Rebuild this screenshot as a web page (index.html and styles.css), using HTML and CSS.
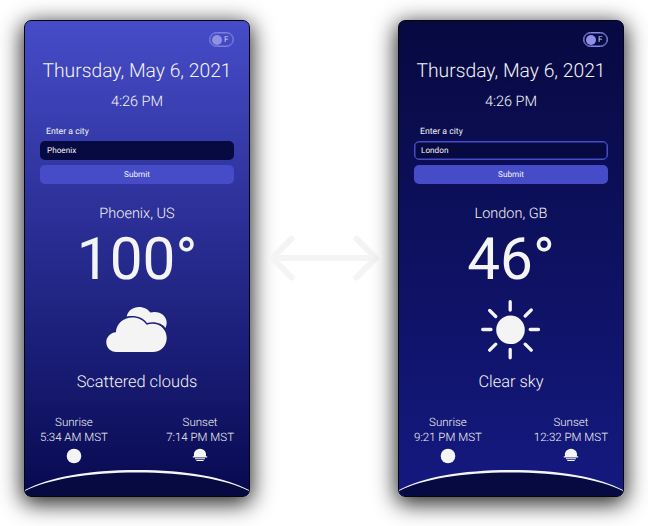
FILE: index.html
```html
<!DOCTYPE html>
<html lang="en">
<head>
<meta charset="utf-8">
<title>Weather</title>
<link rel="stylesheet" href="styles.css">
</head>
<body>
<main class="stage">
  <section class="card card-day">
    <div class="top"><div class="toggle"><span class="knob"></span><span class="unit">F</span></div></div>
    <h1 class="date">Thursday, May 6, 2021</h1>
    <p class="time">4:26 PM</p>
    <div class="form">
      <label class="label">Enter a city</label>
      <div class="input">Phoenix</div>
      <div class="submit">Submit</div>
    </div>
    <h2 class="city">Phoenix, US</h2>
    <p class="temp">100°</p>
    <svg class="weather" viewBox="0 0 62 62">
      <path d="M20.700 17.500C22 11.500 27 8 33 8c5 0 9 2.300 11.200 5.500C53 11 60.700 16.500 60.700 23.500c0 2-.4 3.800-1.200 5.500C56.500 24.500 49 22 41 24 37 18.500 30 16 20.700 17.500z"/>
      <path d="M10.200 53C4.700 53 .3 48.600.3 43.200c0-5.200 4.100-9.600 9.600-10C10.200 25 17.200 18.500 26.200 18.500c6 0 11.500 2.700 14.500 7.300C51.200 22 60.700 29 60.700 39 60.700 47 54.700 53 46.700 53z"/>
    </svg>
    <p class="desc">Scattered clouds</p>
    <div class="times">
      <div class="event"><span>Sunrise</span><span>5:34 AM MST</span>
        <svg class="small" viewBox="0 0 16 16"><circle cx="8" cy="8" r="7.300"/></svg></div>
      <div class="event"><span>Sunset</span><span>7:14 PM MST</span>
        <svg class="small" viewBox="0 0 16 16"><path d="M2.200 8.500C1 4.500 3.800.8 8 .8S15 4.500 13.800 8.500zM.8 8.300h14.400v1.200H.8zM3 10.300h10v1H3zM4.300 12h7.400v1H4.300z"/></svg></div>
    </div>
    <svg class="hill" viewBox="0 0 224 26"><path class="ground" d="M0 21C24 9 63 2 112 2S200 9 224 21V26H0z"/><path class="rim" d="M0 20C24 7.200 63 0 112 0S200 7.200 224 20V21C200 9.200 161 2.600 112 2.600S24 9.200 0 21z"/></svg>
  </section>

  <svg class="arrow" viewBox="0 0 110 46"><path d="M4 23h102M22.500 3.700 3.200 23 22.500 42.500M87.500 3.700 106.800 23 87.500 42.500"/></svg>

  <section class="card card-night">
    <div class="top"><div class="toggle"><span class="knob"></span><span class="unit">F</span></div></div>
    <h1 class="date">Thursday, May 6, 2021</h1>
    <p class="time">4:26 PM</p>
    <div class="form">
      <label class="label">Enter a city</label>
      <div class="input">London</div>
      <div class="submit">Submit</div>
    </div>
    <h2 class="city">London, GB</h2>
    <p class="temp">46°</p>
    <svg class="weather" viewBox="0 0 62 62">
      <circle cx="30.500" cy="30.800" r="14.300"/>
      <path class="rays" d="M30.200 2.700v8.300M30.200 50.500v8.300M2.700 30.500h8.300M50.200 30.500h8.300M9.700 11.500l6 6M45.200 17l6-6M9.700 51.200l6-6M45.200 45.200l6 6"/>
    </svg>
    <p class="desc">Clear sky</p>
    <div class="times">
      <div class="event"><span>Sunrise</span><span>9:21 PM MST</span>
        <svg class="small" viewBox="0 0 16 16"><circle cx="8" cy="8" r="7.300"/></svg></div>
      <div class="event"><span>Sunset</span><span>12:32 PM MST</span>
        <svg class="small" viewBox="0 0 16 16"><path d="M2.200 8.500C1 4.500 3.800.8 8 .8S15 4.500 13.800 8.500zM.8 8.300h14.400v1.200H.8zM3 10.300h10v1H3zM4.300 12h7.400v1H4.300z"/></svg></div>
    </div>
    <svg class="hill" viewBox="0 0 224 26"><path class="ground" d="M0 21C24 9 63 2 112 2S200 9 224 21V26H0z"/><path class="rim" d="M0 20C24 7.200 63 0 112 0S200 7.200 224 20V21C200 9.200 161 2.600 112 2.600S24 9.200 0 21z"/></svg>
  </section>
</main>
</body>
</html>
```

FILE: styles.css
```css
* { box-sizing: border-box; margin: 0; padding: 0; }
body { width: 648px; height: 526px; overflow: hidden; background: #fff; font-family: Roboto, sans-serif; color: #f4f4f4; text-rendering: geometricPrecision; }
.stage { display: flex; justify-content: space-between; align-items: flex-start; padding: 20px 24px 0; }
.card { width: 226px; height: 477px; border: 1px solid #050510; border-radius: 7px; overflow: hidden; display: flex; flex-direction: column; align-items: center; font-weight: 300; text-align: center; box-shadow: 0 5px 22px 2px rgba(0, 0, 0, .85); }
.card-day { background: linear-gradient(#464cc8 0%, #2b2f96 42%, #15186c 78%, #07094f 100%); }
.card-night { background: linear-gradient(#070941, #151980); }
.top { width: 100%; height: 36px; padding: 11px 15px 0; display: flex; justify-content: flex-end; }
.toggle { width: 25px; height: 15px; border: 1.500px solid #7c80dc; border-radius: 8px; display: flex; align-items: center; padding-left: 2px; gap: 2px; box-shadow: inset 0 0 0 .5px #7c80dc; }
.card-night .toggle { border-color: #8588e2; }
.knob { width: 10px; height: 10px; border-radius: 50%; background: #9091e3; }
.unit { font-size: 8.200px; line-height: 13px; padding-top: 1px; font-weight: 400; color: #d0d1f4; }
.date { font-size: 19.300px; font-weight: 300; line-height: 28px; height: 28px; white-space: nowrap; }
.time { font-size: 14.500px; line-height: 22px; height: 20px; margin-top: 6px; }
.form { width: 194px; margin-top: 14px; font-weight: 400; font-size: 8.700px; text-align: left; }
.label { display: block; height: 16px; line-height: 14px; padding-left: 6px; }
.input { height: 19px; line-height: 20px; padding-left: 7px; font-size: 8.200px; border-radius: 5px; background: #070941; }
.card-night .input { border: 1px solid #464cc8; line-height: 18px; padding-left: 6px; box-shadow: inset 0 0 0 .5px #464cc8; }
.submit { height: 19px; line-height: 21px; margin-top: 5px; font-size: 8.200px; border-radius: 5px; background: #464cc8; text-align: center; }
.city { font-size: 14.500px; line-height: 22px; height: 20px; font-weight: 300; margin-top: 19px; }
.temp { font-size: 58.500px; line-height: 69px; height: 68px; margin-top: 3px; font-weight: 400; }
.weather { width: 62px; height: 62px; margin-top: 5px; fill: #f4f4f4; }
.rays { fill: none; stroke: #f4f4f4; stroke-width: 3.300; stroke-linecap: round; }
.desc { font-size: 16.400px; line-height: 24px; height: 22px; margin-top: 10px; }
.times { width: 194px; display: flex; justify-content: space-between; margin-top: 22px; }
.event { display: flex; flex-direction: column; align-items: center; font-size: 11.500px; line-height: 15px; white-space: nowrap; }
.small { width: 16px; height: 16px; margin-top: 3px; fill: #f4f4f4; }
.hill { width: 224px; height: 26px; margin-top: auto; display: block; flex: none; }
.ground { fill: #070941; }
.rim { fill: #f4f4f4; }
.arrow { width: 110px; height: 46px; margin-top: 215px; fill: none; stroke: #f4f4f4; stroke-width: 6; stroke-linecap: round; stroke-linejoin: round; }
```
